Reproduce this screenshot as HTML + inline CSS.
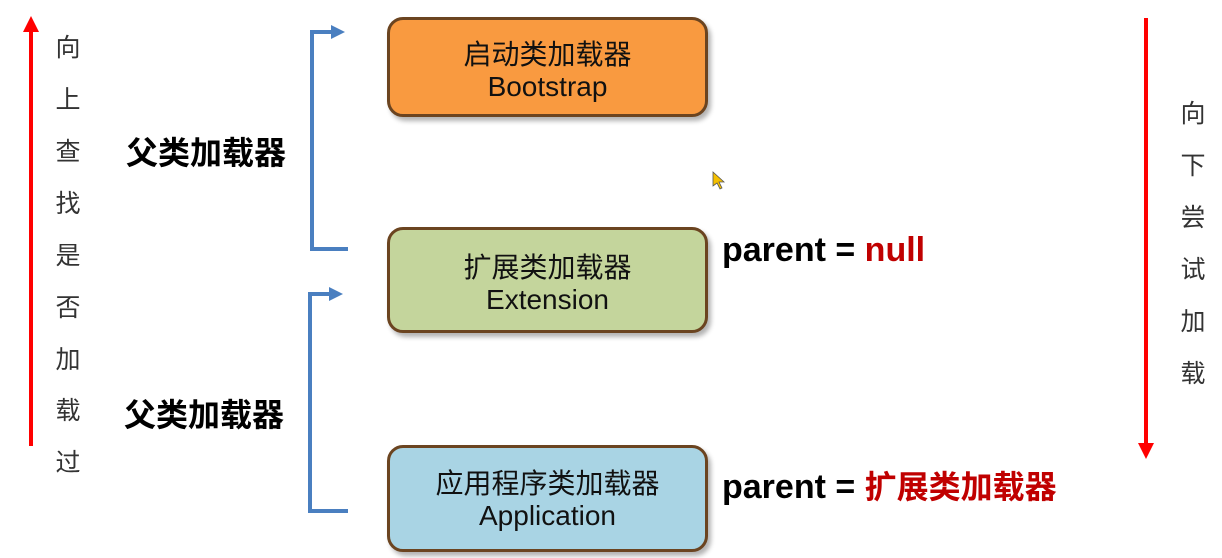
<!DOCTYPE html>
<html><head><meta charset="utf-8"><style>
body{margin:0;width:1222px;height:558px;background:#fff;position:relative;overflow:hidden;font-family:"Liberation Sans","Noto Sans CJK SC",sans-serif}
.a{position:absolute}
.box{position:absolute;left:387px;width:321px;border:3px solid #6b4420;border-radius:16px;box-shadow:3px 4px 5px rgba(0,0,0,.3);text-align:center;font-size:28px;color:#111;line-height:32px;box-sizing:border-box}
.ch{position:absolute;font-size:25px;color:#333;width:30px;text-align:center}
.b{font-weight:bold;font-size:32px;color:#000;white-space:nowrap}
.p{font-size:34px}
.p .c{font-size:32px}
.r{color:#c00000}
</style></head><body>
<svg class="a" style="left:0;top:0" width="1222" height="558">
<g stroke="#ff0000" stroke-width="4" fill="#ff0000">
<line x1="31" y1="30" x2="31" y2="446"/>
<polygon points="23,32 39,32 31,16" stroke="none"/>
<line x1="1146" y1="18" x2="1146" y2="445"/>
<polygon points="1138,443 1154,443 1146,459" stroke="none"/>
</g>
<g stroke="#4a7fc0" stroke-width="4" fill="none">
<polyline points="348,249 312,249 312,32 333,32"/>
<polyline points="348,511 310,511 310,294 331,294"/>
</g>
<g fill="#4a7fc0">
<polygon points="331,25 345,32 331,39"/>
<polygon points="329,287 343,294 329,301"/>
</g>
<polygon points="713,172 713,186 717,183 720,189 722,188 719,182 724,182" fill="#f5c000" stroke="#555" stroke-width="0.8"/>
</svg>
<div class="ch" style="left:53px;top:28px">向</div>
<div class="ch" style="left:53px;top:80px">上</div>
<div class="ch" style="left:53px;top:132px">查</div>
<div class="ch" style="left:53px;top:184px">找</div>
<div class="ch" style="left:53px;top:236px">是</div>
<div class="ch" style="left:53px;top:288px">否</div>
<div class="ch" style="left:53px;top:340px">加</div>
<div class="ch" style="left:53px;top:391px">载</div>
<div class="ch" style="left:53px;top:443px">过</div>
<div class="ch" style="left:1178px;top:94px">向</div>
<div class="ch" style="left:1178px;top:146px">下</div>
<div class="ch" style="left:1178px;top:198px">尝</div>
<div class="ch" style="left:1178px;top:250px">试</div>
<div class="ch" style="left:1178px;top:302px">加</div>
<div class="ch" style="left:1178px;top:354px">载</div>
<div class="a b" style="left:126px;top:128px">父类加载器</div>
<div class="a b" style="left:124px;top:390px">父类加载器</div>
<div class="box" style="top:17px;height:100px;background:#f99a40;padding-top:19px">启动类加载器<br>Bootstrap</div>
<div class="box" style="top:227px;height:106px;background:#c4d59c;padding-top:22px">扩展类加载器<br>Extension</div>
<div class="box" style="top:445px;height:107px;background:#a9d4e4;padding-top:20px">应用程序类加载器<br>Application</div>
<div class="a b p" style="left:722px;top:231px">parent = <span class="r">null</span></div>
<div class="a b p" style="left:722px;top:462px">parent = <span class="r c">扩展类加载器</span></div>
</body></html>
